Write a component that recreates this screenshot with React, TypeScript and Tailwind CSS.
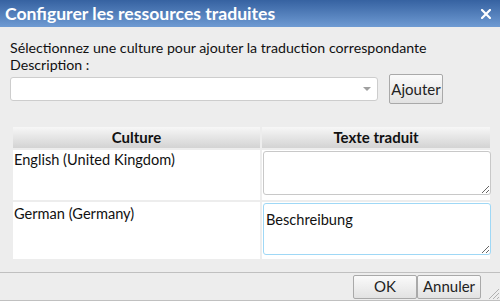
import React from 'react';

// ─── Helpers ─────────────────────────────────────

const font = { fontFamily: 'Lato, "Open Sans", sans-serif' };

function GreyButton({ label, className }: { label: string; className: string }) {
  return (
    <button
      className={`flex items-center justify-center border border-[#a9a9a9] rounded-[2px] bg-gradient-to-b from-[#fafafa] to-[#e2e2e2] text-[15px] text-[#222] ${className}`}
    >
      {label}
    </button>
  );
}

// ─── Component ─────────────────────────────────

export default function App() {
  return (
    <div
      className="w-[500px] h-[301px] bg-[#ededed] flex flex-col overflow-hidden text-[#111]"
      style={font}
    >
      {/* Title bar */}
      <div className="h-[27px] shrink-0 flex items-center justify-between pl-[5px] pr-[9px] bg-gradient-to-b from-[#3662a1] to-[#6f9bd3]">
        <span className="text-white font-bold text-[17.6px] leading-none">
          Configurer les ressources traduites
        </span>
        <svg width="10" height="10" viewBox="0 0 10 10">
          <path d="M1 1 L9 9 M9 1 L1 9" stroke="white" strokeWidth="2.2" strokeLinecap="square" />
        </svg>
      </div>

      {/* Body */}
      <div className="flex-1 flex flex-col px-[10px] pt-[12px]">
        <p className="text-[14.2px] leading-[17px]">
          Sélectionnez une culture pour ajouter la traduction correspondante
        </p>
        <p className="text-[14.2px] leading-[17px]">Description :</p>

        <div className="flex items-center gap-[11px] mt-[1px]">
          <div className="w-[368px] h-[24px] bg-white border border-[#cdcdcd] rounded-[3px] flex items-center justify-end pr-[6px]">
            <svg width="8" height="5" viewBox="0 0 8 5">
              <path d="M0 0 L8 0 L4 4 Z" fill="#a0a0a0" />
            </svg>
          </div>
          <GreyButton label="Ajouter" className="w-[54px] h-[30px]" />
        </div>

        {/* Table */}
        <div className="ml-[3px] mt-[23px] w-[478px] flex flex-col gap-[2px]">
          <div className="flex gap-[2px] h-[21px]">
            <div className="w-[247px] flex items-center justify-center font-bold text-[15px] bg-gradient-to-b from-[#f7f7f7] to-[#d3d3d3]">
              Culture
            </div>
            <div className="w-[228px] flex items-center justify-center font-bold text-[15px] bg-gradient-to-b from-[#f7f7f7] to-[#d3d3d3]">
              Texte traduit
            </div>
          </div>

          <div className="flex gap-[2px] h-[50px]">
            <div className="w-[247px] bg-white px-[1px] text-[14.6px] leading-[18px] pt-[1px]">
              English (United Kingdom)
            </div>
            <div className="w-[228px] bg-white pl-[1px] pt-[1px]">
              <textarea className="w-[228px] h-[44px] border border-[#c8c8c8] rounded-[3px] bg-white resize-y outline-none" />
            </div>
          </div>

          <div className="flex gap-[2px] h-[57px]">
            <div className="w-[247px] bg-white px-[1px] text-[14.6px] leading-[18px] pt-[3px]">
              German (Germany)
            </div>
            <div className="w-[228px] bg-white pl-[1px] pt-[1px]">
              <textarea
                defaultValue="Beschreibung"
                className="w-[228px] h-[52px] border border-[#9fd8f6] rounded-[3px] bg-white resize-y outline-none text-[14.6px] px-[2px] pt-[5px]"
                style={font}
              />
            </div>
          </div>
        </div>
      </div>

      {/* Footer */}
      <div className="h-[29px] shrink-0 border-t border-b border-[#c0c0c0] flex items-center justify-end pr-[19px] relative">
        <GreyButton label="OK" className="w-[64px] h-[24px]" />
        <GreyButton label="Annuler" className="w-[64px] h-[24px]" />
        <svg className="absolute right-0 bottom-0" width="14" height="14" viewBox="0 0 14 14">
          <path d="M13 3 L3 13 M13 7 L7 13 M13 11 L11 13" stroke="#b0b0b0" strokeWidth="1" />
        </svg>
      </div>
    </div>
  );
}
